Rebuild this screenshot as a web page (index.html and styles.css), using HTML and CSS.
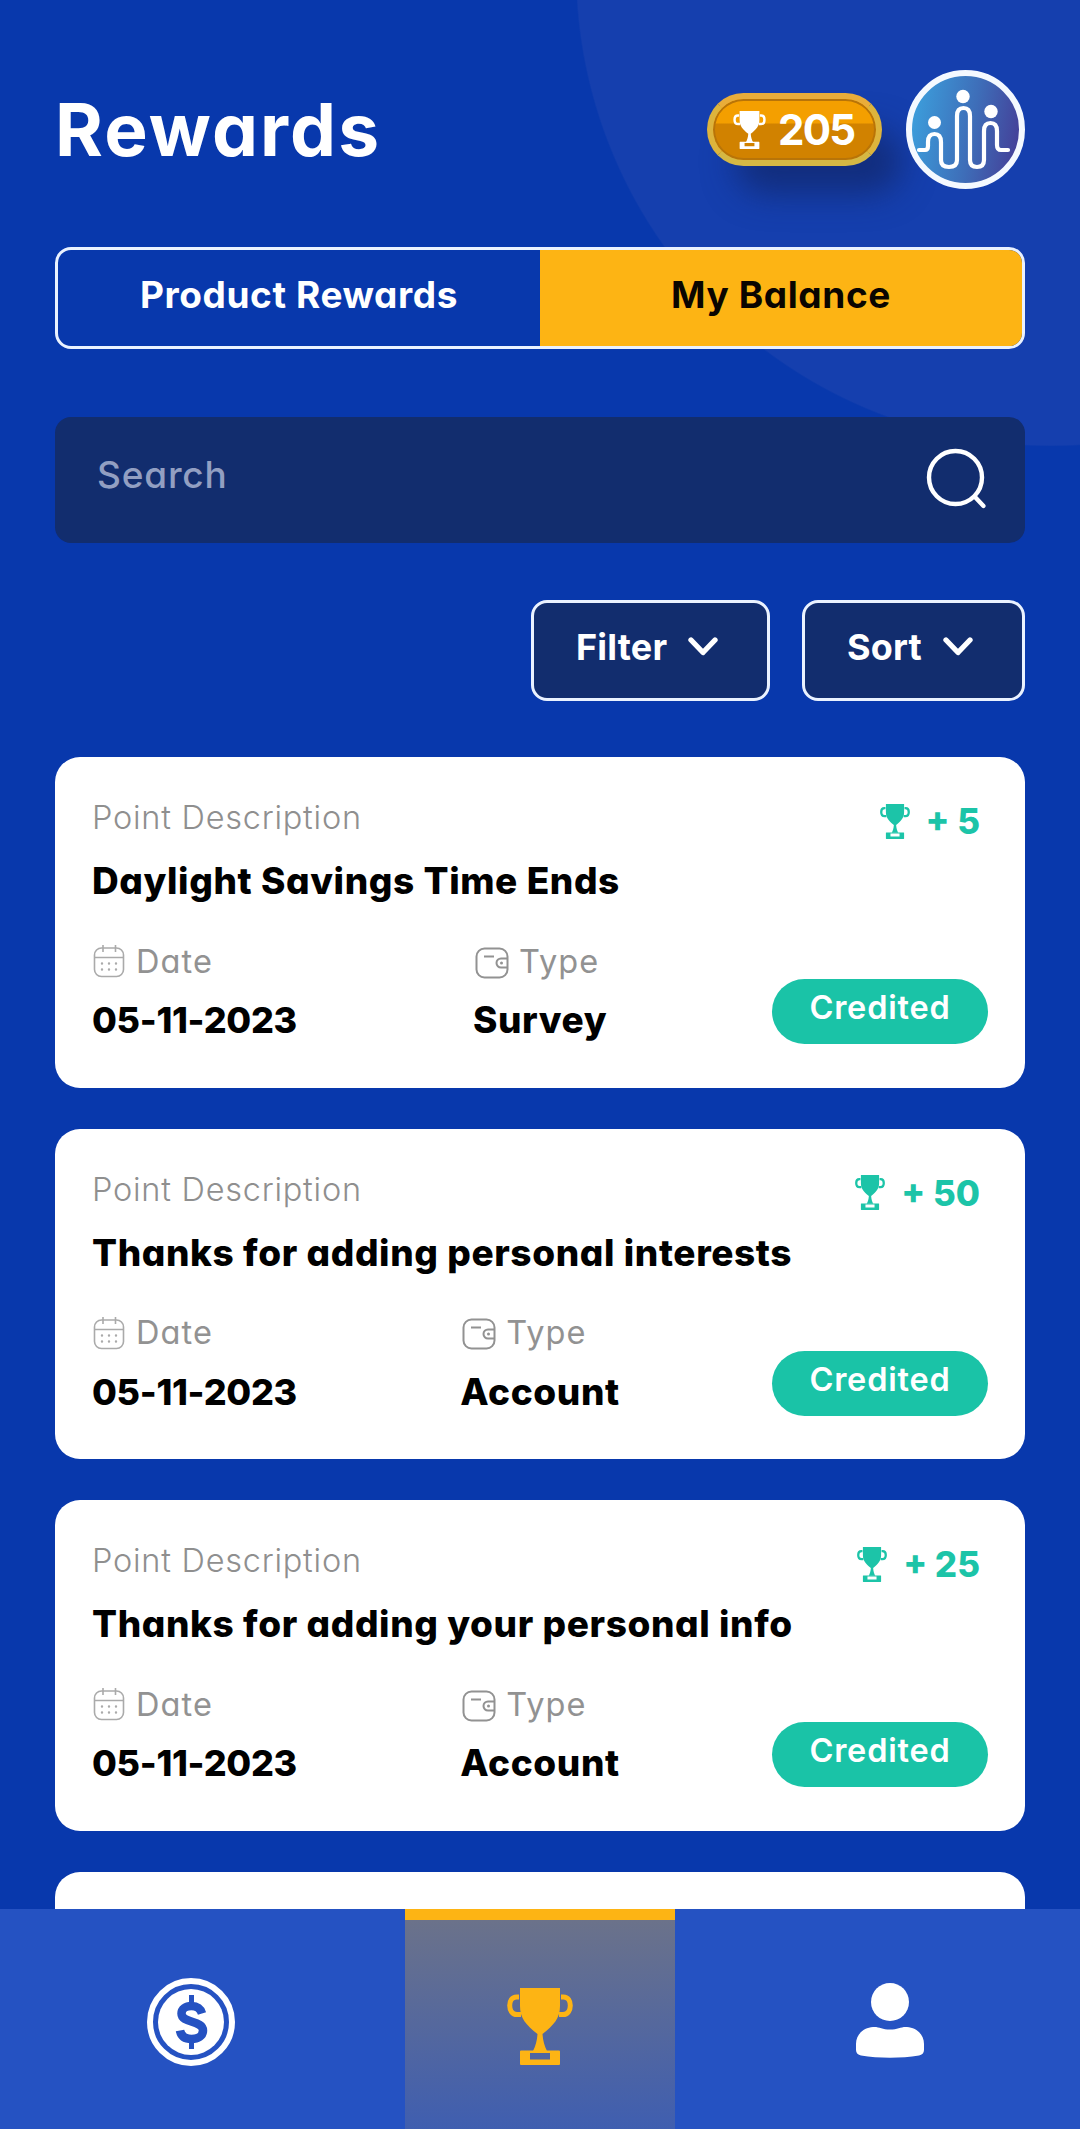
FILE: index.html
```html
<!DOCTYPE html>
<html lang="en">
<head>
    <meta charset="UTF-8">
    <meta name="viewport" content="width=device-width, initial-scale=1.0">
    <title>Rewards</title>
    <link rel="stylesheet" href="styles.css">
</head>
<body>
    <!-- Shared icons -->
    <svg class="sprite" width="0" height="0">
        <symbol id="trophy" viewBox="0 0 66 77">
            <path d="M13 0h40v18c0 12-6 19-17.500 28 .5 7 2 12 4.500 17H26c2.500-5 4-10 4.500-17C19 37 13 30 13 18z"/>
            <path d="M12 9H9.500C5 9 2.700 13 2.700 17.500S5 26.500 10 26.500h4M54 9h2.500C61 9 63.300 13 63.300 17.500S61 26.500 56 26.500h-4" fill="none" stroke="currentColor" stroke-width="5"/>
            <path fill-rule="evenodd" d="M14 62.500h38a1 1 0 0 1 1 1V76a1 1 0 0 1-1 1H14a1 1 0 0 1-1-1V63.500a1 1 0 0 1 1-1zM23 65v6.500h20V65z"/>
        </symbol>
        <symbol id="calendar" viewBox="0 0 32 34">
            <g fill="none" stroke="currentColor" stroke-width="1.600">
                <rect x="1.500" y="4" width="29" height="28.500" rx="7"/>
                <path d="M1.500 13.500h29M10 1v7M22.500 1v7"/>
                <path d="M9 19.500h0M16 19.500h0M23 19.500h0M9 25.500h0M16 25.500h0M23 25.500h0" stroke-width="2.400" stroke-linecap="round"/>
            </g>
        </symbol>
        <symbol id="wallet" viewBox="0 0 34 32">
            <g fill="none" stroke="currentColor" stroke-width="2">
                <rect x="1.500" y="1.500" width="31" height="29" rx="8"/>
                <path d="M9 9.500h10M32 11.500h-6a4.500 4.500 0 0 0 0 9h6"/>
                <path d="M26.500 16h0" stroke-width="3" stroke-linecap="round"/>
            </g>
        </symbol>
        <symbol id="chevron" viewBox="0 0 30 19">
            <path d="M3 3 15 15.500 27 3" fill="none" stroke="currentColor" stroke-width="5.300" stroke-linecap="round" stroke-linejoin="round"/>
        </symbol>
    </svg>

    <div class="main-content">
        <div class="header">
            <h1>Rewards</h1>
            <div class="badge">
                <svg class="badge-icon"><use href="#trophy"/></svg>
                <span>205</span>
            </div>
            <div class="avatar">
                <svg width="107" height="107" viewBox="0 0 107 107">
                    <g fill="none" stroke="white" stroke-width="4.200" stroke-linecap="round" stroke-linejoin="round">
                        <path d="M7 74h6q3 0 3-4v-4q0-8 6.500-8t6.500 8v18q0 7 8 7t8-7V40q0-8 6.500-8t6.500 8v44q0 7 7 7t7-7V55q0-8 6.500-8t6.500 8v14q0 5 4 5h7"/>
                    </g>
                    <circle cx="22.500" cy="46.500" r="6.500" fill="white"/>
                    <circle cx="51" cy="20.500" r="6.700" fill="white"/>
                    <circle cx="79" cy="35.500" r="6.700" fill="white"/>
                </svg>
            </div>
        </div>

        <div class="tabs">
            <a class="tab" href="#">Product Rewards</a>
            <a class="tab active" href="#">My Balance</a>
        </div>

        <div class="search">
            <span>Search</span>
            <svg width="62" height="64" viewBox="0 0 62 64">
                <g fill="none" stroke="white" stroke-width="4.400" stroke-linecap="round">
                    <circle cx="29.500" cy="29.500" r="26.500"/>
                    <path d="M49 49l8.500 9"/>
                </g>
            </svg>
        </div>

        <div class="actions">
            <button class="button filter">Filter <svg class="chevron"><use href="#chevron"/></svg></button>
            <button class="button sort">Sort <svg class="chevron"><use href="#chevron"/></svg></button>
        </div>

        <div class="list">
            <div class="card">
                <div class="card-top">
                    <span class="description">Point Description</span>
                    <span class="points"><svg><use href="#trophy"/></svg>+ 5</span>
                </div>
                <h2>Daylight Savings Time Ends</h2>
                <div class="card-info">
                    <div>
                        <div class="label"><svg class="icon-date"><use href="#calendar"/></svg>Date</div>
                        <div class="value date">05-11-2023</div>
                    </div>
                    <div>
                        <div class="label"><svg class="icon-type"><use href="#wallet"/></svg>Type</div>
                        <div class="value">Survey</div>
                    </div>
                    <span class="status">Credited</span>
                </div>
            </div>

            <div class="card">
                <div class="card-top">
                    <span class="description">Point Description</span>
                    <span class="points"><svg><use href="#trophy"/></svg>+ 50</span>
                </div>
                <h2>Thanks for adding personal interests</h2>
                <div class="card-info">
                    <div>
                        <div class="label"><svg class="icon-date"><use href="#calendar"/></svg>Date</div>
                        <div class="value date">05-11-2023</div>
                    </div>
                    <div>
                        <div class="label"><svg class="icon-type"><use href="#wallet"/></svg>Type</div>
                        <div class="value">Account</div>
                    </div>
                    <span class="status">Credited</span>
                </div>
            </div>

            <div class="card">
                <div class="card-top">
                    <span class="description">Point Description</span>
                    <span class="points"><svg><use href="#trophy"/></svg>+ 25</span>
                </div>
                <h2>Thanks for adding your personal info</h2>
                <div class="card-info">
                    <div>
                        <div class="label"><svg class="icon-date"><use href="#calendar"/></svg>Date</div>
                        <div class="value date">05-11-2023</div>
                    </div>
                    <div>
                        <div class="label"><svg class="icon-type"><use href="#wallet"/></svg>Type</div>
                        <div class="value">Account</div>
                    </div>
                    <span class="status">Credited</span>
                </div>
            </div>

            <div class="card"></div>
        </div>
    </div>

    <div class="navbar">
        <a class="nav-item coin" href="#">
            <svg width="88" height="88" viewBox="0 0 88 88">
                <circle cx="44" cy="44" r="41" fill="none" stroke="white" stroke-width="6"/>
                <circle cx="44" cy="44" r="33" fill="white"/>
                <g fill="none" stroke="#2552c2" stroke-width="8.500">
                    <path d="M55 35.500C53.500 30.500 50 28 44.500 28 38.500 28 34.500 31 34.500 35.500c0 10 21.500 6.500 21.500 17 0 5.500-5 8.500-11.500 8.500C38 61 34 58 33 52.500"/>
                    <path d="M44.500 17v10M44.500 61v10" stroke-width="5"/>
                </g>
            </svg>
        </a>
        <a class="nav-item active" href="#">
            <svg class="nav-trophy"><use href="#trophy"/></svg>
        </a>
        <a class="nav-item user" href="#">
            <svg width="70" height="78" viewBox="0 0 70 78">
                <circle cx="35" cy="20" r="19" fill="white"/>
                <path d="M18 45c6-.5 9 2.500 17 2.500s11-3 17-2.500c9 .5 17 7 17 17V68c0 3-2 5-5 5.500-18 3-40 3-58 0-3-.5-5-2.500-5-5.500v-6c0-10 8-16.500 17-17z" fill="white"/>
            </svg>
        </a>
    </div>
</body>
</html>
```
FILE: styles.css
```css
* { margin: 0; padding: 0; box-sizing: border-box; }
body {
    display: flex;
    flex-direction: column;
    height: 2129px;
    overflow: hidden;
    background: radial-gradient(circle at 1051px -29px, #153fae 474px, #0838ac 475.5px);
    font-family: Inter, "Open Sans", sans-serif;
    font-feature-settings: "cv11";
}
svg { display: block; flex: none; fill: currentColor; }
a { text-decoration: none; color: inherit; }
.sprite { position: absolute; }

.main-content {
    flex: 1;
    min-height: 0;
    overflow: hidden;
    padding: 70px 55px 0;
}

/* Header */
.header {
    display: flex;
    align-items: center;
    height: 119px;
    color: white;
}
h1 {
    flex: 1;
    font-size: 73px;
    font-weight: 700;
    letter-spacing: 2.1px;
}
.badge {
    display: flex;
    align-items: center;
    width: 175px;
    height: 73px;
    padding-left: 20px;
    margin-right: 24px;
    border: 6px solid;
    border-color: #e9ad3a #ddb43c #d5b844;
    border-radius: 37px;
    background: linear-gradient(#f49f00 24px, #d18200 25px);
    box-shadow: inset 0 0 0 2px #b87408, 24px 32px 32px -4px rgba(18, 40, 110, 0.75);
    font-size: 42px;
    font-weight: 700;
    letter-spacing: -1.8px;
}
.badge-icon {
    width: 33px;
    height: 38px;
    margin-right: 12px;
}
.avatar {
    width: 119px;
    height: 119px;
    border: 6px solid #f4f9ff;
    border-radius: 50%;
    background: linear-gradient(100deg, #3c9ddb 10%, #3e6db8 55%, #453a94 95%);
    background-origin: border-box;
}

/* Tabs */
.tabs {
    display: flex;
    height: 102px;
    margin-top: 58px;
    border: 3px solid #eaf2ff;
    border-radius: 16px;
    overflow: hidden;
    background-color: #0838ac;
    color: white;
    font-size: 37px;
    font-weight: 700;
    letter-spacing: 0.6px;
}
.tab {
    flex: 1;
    display: flex;
    align-items: center;
    justify-content: center;
    padding-bottom: 8px;
}
.tab.active {
    background-color: #fdb414;
    color: #0a0500;
}

/* Search */
.search {
    display: flex;
    align-items: center;
    justify-content: space-between;
    height: 126px;
    margin-top: 68px;
    padding: 0 37px 0 42px;
    border-radius: 16px;
    background-color: #122d6e;
    color: #929fc2;
    font-size: 37px;
    font-weight: 500;
    letter-spacing: 0.8px;
}
.search span { padding-bottom: 11px; }

/* Filter and sort */
.actions {
    display: flex;
    justify-content: flex-end;
    gap: 32px;
    margin-top: 57px;
}
.button {
    display: flex;
    align-items: center;
    justify-content: space-between;
    height: 101px;
    padding: 0 49px 8px 42px;
    border: 3px solid #eaf2ff;
    border-radius: 16px;
    background-color: #122d6e;
    color: white;
    font: inherit;
    font-size: 36px;
    font-weight: 700;
    letter-spacing: 0.2px;
    cursor: pointer;
}
.filter { width: 239px; }
.sort { width: 223px; }
.chevron { width: 30px; height: 19px; }

/* Cards */
.list {
    display: flex;
    flex-direction: column;
    gap: 41px;
    margin-top: 56px;
}
.card {
    flex: none;
    height: 330.6px;
    padding: 41px 37px 0 37px;
    border-radius: 25px;
    background-color: white;
    color: black;
}
.card-top {
    display: flex;
    justify-content: space-between;
    height: 40px;
}
.description {
    color: #8f8f8f;
    font-size: 32.5px;
    font-weight: 300;
    line-height: 40px;
    letter-spacing: 0.75px;
}
.points {
    display: flex;
    align-items: center;
    height: 46px;
    margin-right: 8px;
    color: #1cc4a8;
    font-size: 35px;
    font-weight: 800;
}
.points svg {
    width: 30px;
    height: 35px;
    margin-right: 16px;
}
h2 {
    margin-top: 20px;
    font-size: 37px;
    font-weight: 800;
    line-height: 46px;
    letter-spacing: 0.6px;
    white-space: nowrap;
}
.card-info {
    display: grid;
    grid-template-columns: 1fr auto 1fr;
    margin-top: 37px;
}
.label {
    display: flex;
    align-items: center;
    height: 40px;
    color: #929292;
    font-size: 32.5px;
    letter-spacing: 1.1px;
}
.icon-date {
    width: 32px;
    height: 34px;
    margin: 0 11px 0 1px;
    color: #aaa;
}
.icon-type {
    width: 34px;
    height: 32px;
    margin: 3px 10px 0 2px;
}
.value {
    margin-top: 16px;
    font-size: 37px;
    font-weight: 800;
    line-height: 46px;
    letter-spacing: 0.6px;
}
.value.date {
    font-size: 36px;
    letter-spacing: -0.3px;
}
.status {
    align-self: end;
    justify-self: end;
    width: 216px;
    height: 65px;
    margin-bottom: -1px;
    border-radius: 33px;
    background-color: #1ac3a7;
    color: white;
    font-size: 32.5px;
    font-weight: 600;
    line-height: 58px;
    letter-spacing: 0.8px;
    text-align: center;
}

/* Bottom navigation */
.navbar {
    display: flex;
    flex: none;
    height: 220px;
    background-color: #2552c2;
    color: white;
}
.nav-item {
    display: flex;
    align-items: center;
    justify-content: center;
    width: 405px;
    padding-top: 6px;
}
.coin { padding-right: 24px; }
.user { padding: 4px 0 0 24px; }
.nav-item.active {
    width: 270px;
    padding-top: 4px;
    border-top: 11px solid #fdb414;
    background: linear-gradient(#6b728a, #3f5eb0);
    color: #fdb414;
}
.nav-trophy { width: 66px; height: 77px; }
```
